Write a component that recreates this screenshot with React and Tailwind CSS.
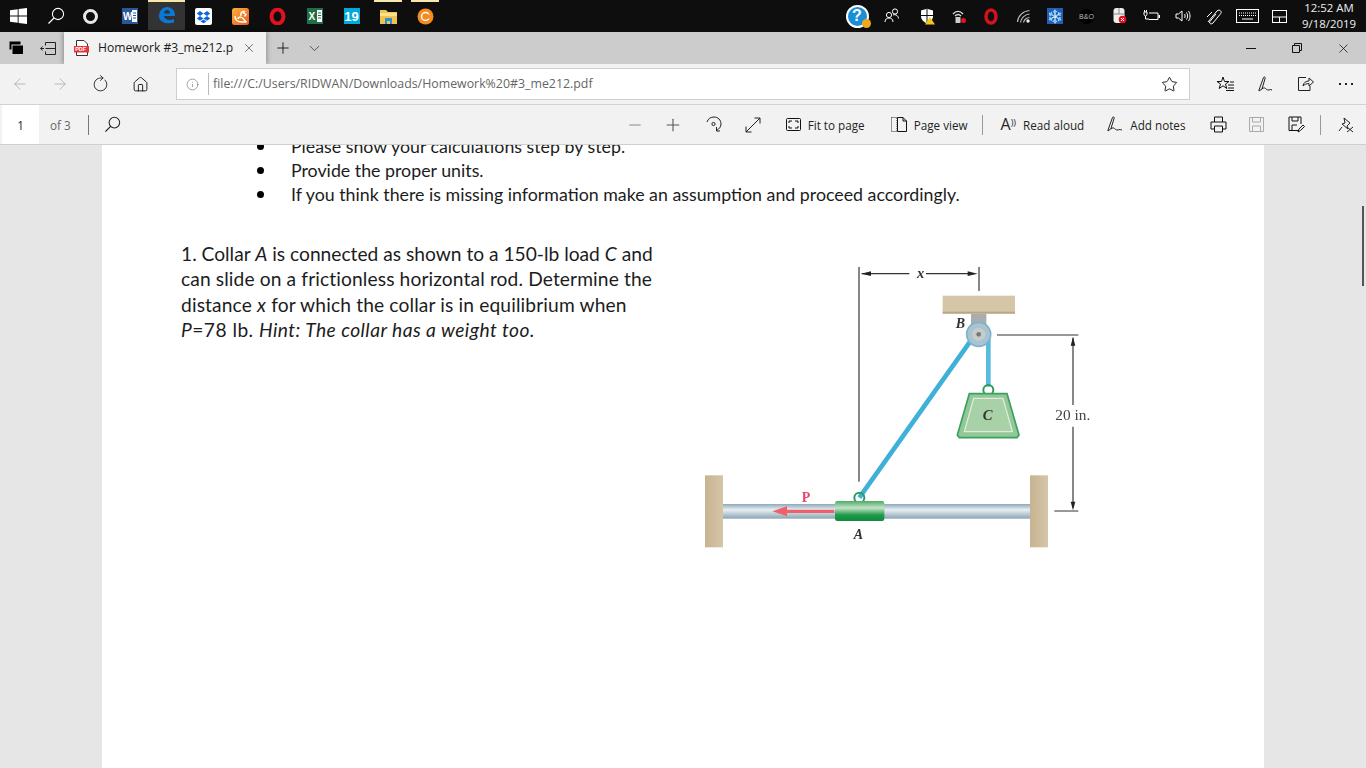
import { ArrowLeft, ArrowRight, ChevronDown, Home, Info, Minus, Plus, RotateCw, Star, X } from "lucide-react";

function Svg({ w = 20, h = 20, vb, children, className = "" }) {
  return (
    <svg width={w} height={h} viewBox={vb || `0 0 ${w} ${h}`} fill="none" className={className}>
      {children}
    </svg>
  );
}

const Search = ({ c = "#fff", size = 18 }) => (
  <Svg w={size} h={size} vb="0 0 18 18">
    <circle cx="11" cy="7" r="5.6" stroke={c} strokeWidth="1.1" />
    <path d="M7 11 L1.5 16.5" stroke={c} strokeWidth="1.3" />
  </Svg>
);

function Slot({ className = "w-[37px]", children }) {
  return <div className={`flex h-full shrink-0 items-center justify-center ${className}`}>{children}</div>;
}

function Taskbar() {
  return (
    <div className="flex h-[32px] shrink-0 items-center bg-[#0e0e0e] text-white">
      <Slot>
        <Svg w={17} h={16}>
          <path d="M0 2.3 7.7 1.2V7.6H0ZM8.6 1 17 0V7.6H8.6ZM0 8.5H7.7V14.8L0 13.7ZM8.6 8.5H17V16L8.6 14.9Z" fill="#fff" />
        </Svg>
      </Slot>
      <Slot><Search /></Slot>
      <Slot className="w-[33px]">
        <div className="h-[15px] w-[15px] rounded-full border-[3px] border-[#e8e8e8]" />
      </Slot>
      <Slot className="w-[41px] pl-[4px]">
        <Svg w={16} h={16}>
          <rect width="16" height="16" fill="#2b579a" />
          <rect x="10" y="2" width="5" height="12" fill="#fff" />
          <path d="M11 5h3M11 7.5h3M11 10h3" stroke="#2b579a" />
          <text x="1" y="12" fontSize="10" fontWeight="700" fill="#fff" fontFamily="Liberation Sans">W</text>
        </Svg>
      </Slot>
      <div className="relative flex h-[30px] w-[37px] shrink-0 items-center justify-center self-start bg-[#333333]">
        <div className="absolute left-0 top-0 h-[2px] w-full bg-[#f7e7a8]" />
        <Svg w={18} h={18}>
          <path fillRule="evenodd" d="M9 1C14 1 17 4.500 17 10H6C6.500 13.500 11 15 16 13V16.500C10 18.500 1 17 1 10 1 5 4.500 1 9 1ZM6 7.500H12C12 5.500 11 4 9 4 7.500 4 6 5.500 6 7.500Z" fill="#0a78d7" />
        </Svg>
      </div>
      <Slot>
        <Svg w={17} h={17}>
          <rect width="17" height="17" rx="2" fill="#fff" />
          <path d="M5 3 8.500 5.500 5 8 1.800 5.500ZM12 3 15.200 5.500 12 8 8.500 5.500ZM5 8 8.500 10.500 5 12.800 1.800 10.500ZM12 8 15.200 10.500 12 12.800 8.500 10.500ZM5.500 13.500 8.500 11.500 11.500 13.500 8.500 15.300Z" fill="#0f66d8" />
        </Svg>
      </Slot>
      <Slot>
        <Svg w={17} h={17}>
          <defs>
            <linearGradient id="uc" x1="0" y1="0" x2="1" y2="1">
              <stop offset="0" stopColor="#fbb03b" />
              <stop offset="1" stopColor="#ee5a1c" />
            </linearGradient>
          </defs>
          <rect width="17" height="17" rx="2.500" fill="url(#uc)" />
          <path d="M3 8C3 12 6 14 10 14H14.500C12.500 13 12 11 10.500 10 8.500 8.500 6 9 6 11M9 8C8 5 10 3 12.500 3.500L11.500 5 14 6.500 12.500 8.500" stroke="#fff" strokeWidth="1.400" />
        </Svg>
      </Slot>
      <Slot>
        <Svg w={17} h={17}>
          <ellipse cx="8.500" cy="8.500" rx="6" ry="7" stroke="#e0121f" strokeWidth="4" />
        </Svg>
      </Slot>
      <Slot>
        <Svg w={16} h={16}>
          <rect width="16" height="16" fill="#1e7145" />
          <rect x="10" y="2" width="5" height="12" fill="#fff" />
          <path d="M11 5h3M11 7.500h3M11 10h3" stroke="#1e7145" />
          <text x="1.500" y="12" fontSize="10" fontWeight="700" fill="#fff" fontFamily="Liberation Sans">X</text>
        </Svg>
      </Slot>
      <Slot>
        <div className="flex h-[16px] w-[16px] items-center justify-center bg-[#00a8dc] font-['Liberation_Sans'] text-[13px] font-bold leading-none text-white">19</div>
      </Slot>
      <div className="relative flex h-full w-[37px] shrink-0 items-center justify-center">
        <div className="absolute left-[4px] top-0 h-[2px] w-[28px] bg-[#f7e7a8]" />
        <Svg w={17} h={15}>
          <path d="M0 1H6L8 3H17V15H0Z" fill="#f0c24e" />
          <rect y="4" width="17" height="3" fill="#fbe08a" />
          <rect x="5" y="9" width="7" height="6" fill="#2a8fd6" />
          <rect x="7" y="12" width="3" height="3" fill="#f0c24e" />
        </Svg>
      </div>
      <div className="relative flex h-full w-[37px] shrink-0 items-center justify-center">
        <div className="absolute left-[4px] top-0 h-[2px] w-[28px] bg-[#f7e7a8]" />
        <Svg w={17} h={17}>
          <circle cx="8.500" cy="8.500" r="8" fill="#f58a1f" />
          <circle cx="8.500" cy="8.500" r="4" stroke="#fff" strokeWidth="1.500" />
          <rect x="10" y="6.500" width="3" height="4" fill="#f58a1f" />
        </Svg>
      </div>

      <div className="ml-auto flex h-full items-center">
        <Slot className="w-[34px]">
          <div className="relative flex h-[23px] w-[23px] items-center justify-center rounded-full border-2 border-white bg-[#1a8fd8] font-['Liberation_Sans'] text-[16px] font-bold leading-none text-white">
            ?
            <span className="absolute -bottom-[2px] -right-[4px] h-[9px] w-[9px] rounded-full bg-[#f0a81e]" />
          </div>
        </Slot>
        <Slot className="w-[36px]">
          <Svg w={16} h={16}>
            <circle cx="5" cy="7" r="2.600" stroke="#fff" />
            <circle cx="11" cy="3.500" r="2.600" stroke="#fff" />
            <path d="M1 14C1 11 3 10 5 10S9 11 9 14M9 7C10 6.500 12 6.500 13 7.500 14 8.500 14.500 9.500 14.500 10.500" stroke="#fff" />
          </Svg>
        </Slot>
        <Slot className="w-[33px]">
          <Svg w={16} h={17}>
            <path d="M2 2.500 8 .8 14 2.500V8C14 12 11 14 8 15.500 5 14 2 12 2 8Z" fill="#fff" />
            <path d="M8 1V15M2 7.500H14" stroke="#0e0e0e" />
            <path d="M11 9 16 16.500H6Z" fill="#f5c518" />
          </Svg>
        </Slot>
        <Slot className="w-[31px]">
          <Svg w={16} h={16}>
            <path d="M2 6C5 2.500 9 2.500 12 6M4 8C6 6 8 6 10 8" stroke="#ddd" strokeWidth="1.300" />
            <rect x="4.500" y="9" width="5" height="6" fill="#ccc" />
            <circle cx="12.500" cy="12.500" r="2.500" fill="#e81123" />
          </Svg>
        </Slot>
        <Slot className="w-[33px]">
          <Svg w={16} h={17}>
            <ellipse cx="8" cy="8.500" rx="5" ry="6.500" stroke="#d4121e" strokeWidth="3.400" />
          </Svg>
        </Slot>
        <Slot className="w-[34px]">
          <Svg w={16} h={16}>
            <path d="M1.500 14C2 8 7 3 13.500 2.500M4.500 14.500C5 10.500 8.500 6.500 13.500 6M7.500 14.500C8 12 10.500 9.500 13.500 9.500" stroke="#bbb" strokeWidth="1.200" />
            <circle cx="12" cy="13" r="1.700" fill="#eee" />
          </Svg>
        </Slot>
        <Slot className="w-[28px]">
          <div className="flex h-[16px] w-[16px] items-center justify-center bg-[#1f5fb8] text-[13px] leading-none text-white">❄</div>
        </Slot>
        <Slot className="w-[35px]">
          <div className="flex h-[15px] w-[15px] items-center justify-center rounded-full bg-black font-['Liberation_Sans'] text-[7px] leading-none text-[#bbb]">B&amp;O</div>
        </Slot>
        <Slot className="w-[32px]">
          <Svg w={14} h={16}>
            <rect x="0.500" y="0" width="11" height="15" rx="3" fill="#eee" />
            <path d="M6 0V6M1 6H11" stroke="#888" />
            <circle cx="9.500" cy="11.500" r="3.800" fill="#e81123" />
            <path d="M8 10 11 13M11 10 8 13" stroke="#fff" />
          </Svg>
        </Slot>
        <Slot className="w-[31px]">
          <Svg w={17} h={12}>
            <path d="M1 2V4C1 5.500 2 6 2.500 6S4 5.500 4 4V2ZM2.500 6V9H6" stroke="#fff" />
            <path d="M1.500 0V2M3.500 0V2" stroke="#fff" />
            <path d="M6 3H15V9.500H6" stroke="#fff" />
            <rect x="15.500" y="5" width="1.500" height="3" fill="#fff" />
          </Svg>
        </Slot>
        <Slot className="w-[32px]">
          <Svg w={16} h={14}>
            <path d="M1 5H3.500L7 2V12L3.500 9H1Z" stroke="#fff" />
            <path d="M9.500 5C10.300 6 10.300 8 9.500 9M11.500 3.500C13 5.500 13 8.500 11.500 10.500M13.500 2C15.500 5 15.500 9 13.500 12" stroke="#fff" />
          </Svg>
        </Slot>
        <Slot className="w-[31px]">
          <Svg w={17} h={17}>
            <path d="M2 14 11 3C12 1.500 14.500 2 15 3.500 15.500 5 14.500 6 13.500 7L7 15C5.500 16.500 3.500 16 3.500 14L10 6" stroke="#fff" />
            <path d="M1 9 6 4" stroke="#fff" />
          </Svg>
        </Slot>
        <Slot className="w-[34px]">
          <Svg w={23} h={14}>
            <rect x="0.500" y="0.500" width="22" height="13" stroke="#fff" />
            <path d="M3 4H20M3 6.500H20" stroke="#fff" strokeDasharray="1 1" />
            <path d="M6 10H17" stroke="#fff" />
          </Svg>
        </Slot>
        <Slot className="w-[30px]">
          <Svg w={15} h={13}>
            <rect x="0.500" y="0.500" width="14" height="12" stroke="#fff" />
            <path d="M0 7H15M7.500 7V13" stroke="#fff" />
          </Svg>
        </Slot>
        <div className="-ml-[2px] flex w-[74px] flex-col items-center font-['Open_Sans'] text-[11.4px] leading-[16px] text-[#eee]">
          <span>12:52 AM</span>
          <span>9/18/2019</span>
        </div>
      </div>
    </div>
  );
}

function TabBar() {
  return (
    <div className="flex h-[32px] shrink-0 items-center bg-[#cccccc]">
      <Slot className="w-[32px]">
        <Svg w={15} h={14}>
          <rect x="0.500" y="0.500" width="11" height="8" fill="#000" />
          <rect x="3" y="4" width="11.500" height="9.500" fill="#000" stroke="#ccc" />
        </Svg>
      </Slot>
      <Slot className="w-[32px]">
        <Svg w={17} h={13}>
          <path d="M4 6.500H.7M2.500 4.500.7 6.500 2.500 8.500M5.500 3.500V.5H15.500V12.500H5.500V9.500M5.500 6.500H15.500" stroke="#222" />
        </Svg>
      </Slot>
      <div className="flex h-full w-[202px] items-center bg-[#f2f2f2] pl-[10px] font-['Open_Sans'] text-[12.15px] text-[#1a1a1a] shadow-[2px_0_4px_rgba(0,0,0,0.2),-2px_0_4px_rgba(0,0,0,0.2)]">
        <Svg w={15} h={16}>
          <path d="M2.500.5H10L13.500 4V15.500H2.500Z" fill="#fff" stroke="#333" />
          <rect y="6" width="15" height="6.500" fill="#e8333a" />
          <text x="1.200" y="11.200" fontSize="5.500" fontWeight="700" fill="#fff" fontFamily="Liberation Sans">PDF</text>
        </Svg>
        <span className="ml-[9px] w-[141px] whitespace-nowrap">Homework #3_me212.p</span>
        <X size={14} strokeWidth={1.100} className="ml-[3px] text-[#333]" />
      </div>
      <Slot className="ml-[1px] w-[32px]"><Plus size={18} strokeWidth={1.200} className="text-[#111]" /></Slot>
      <Slot className="w-[30px]"><ChevronDown size={17} strokeWidth={1.100} className="text-[#333]" /></Slot>
      <div className="ml-auto flex h-full items-center">
        <Slot className="w-[46px]"><div className="h-px w-[10px] bg-[#111]" /></Slot>
        <Slot className="w-[46px]">
          <Svg w={10} h={10}>
            <path d="M.5 2.500H7.500V9.500H.5ZM2.500 2.500V.5H9.500V7.500H7.500" stroke="#111" />
          </Svg>
        </Slot>
        <Slot className="w-[46px]"><X size={15} strokeWidth={1.200} className="text-[#111]" /></Slot>
      </div>
    </div>
  );
}

function AddressBar() {
  return (
    <div className="flex h-[41px] shrink-0 items-center border-b border-[#d2d2d2] bg-[#f2f2f2]">
      <Slot className="w-[40px]"><ArrowLeft size={18} strokeWidth={1} className="text-[#a5a5a5]" /></Slot>
      <Slot className="w-[40px]"><ArrowRight size={18} strokeWidth={1} className="text-[#a5a5a5]" /></Slot>
      <Slot className="w-[40px]"><RotateCw size={17} strokeWidth={1.200} className="-rotate-45 text-[#222]" /></Slot>
      <Slot className="w-[40px]"><Home size={17} strokeWidth={1.300} className="text-[#111]" /></Slot>
      <div className="ml-[16px] flex h-[32px] w-[1014px] items-center border border-[#cfcfcf] bg-white font-['Open_Sans'] text-[12.37px] text-[#666]">
        <Slot className="w-[31px]"><Info size={13} strokeWidth={1} className="text-[#555]" /></Slot>
        <div className="h-[22px] w-px bg-[#bbb]" />
        <span className="ml-[4px] pt-[1px]">file:///C:/Users/RIDWAN/Downloads/Homework%20#3_me212.pdf</span>
        <Star size={17} strokeWidth={1.300} className="ml-auto mr-[11px] text-[#111]" />
      </div>
      <div className="flex h-full flex-1 items-center pl-[16px]">
        <Slot className="w-[40px]">
          <Svg w={18} h={16}>
            <path d="M6 1 7.500 5.500H12L8.500 8 9.800 12.500 6 9.800 2.200 12.500 3.500 8 0 5.500H4.500Z" stroke="#111" />
            <path d="M11 9H17M11 12H17M9 14.500H17M13 6H17" stroke="#111" />
          </Svg>
        </Slot>
        <Slot className="w-[40px]">
          <Svg w={18} h={17}>
            <path d="M2 14 6.500 1.500C7 .5 8.500 1 8.200 2L5 13 2 15ZM5 13C8 10 9 14 11 14S13 13 15 14" stroke="#222" />
          </Svg>
        </Slot>
        <Slot className="w-[40px]">
          <Svg w={16} h={16}>
            <path d="M8 1.500H.5V14.500H12V10M5 10C5.500 6.500 8 5 11 5V2L15.500 6 11 10V7.500C8.500 7.500 6.500 8.500 5 10Z" stroke="#222" />
          </Svg>
        </Slot>
        <Slot className="w-[40px]">
          <span className="flex gap-[4px]">
            <i className="h-[2px] w-[2px] bg-[#222]" />
            <i className="h-[2px] w-[2px] bg-[#222]" />
            <i className="h-[2px] w-[2px] bg-[#222]" />
          </span>
        </Slot>
      </div>
    </div>
  );
}

function PdfTool({ icon, label, className = "" }) {
  return (
    <div className={`flex items-center gap-[7px] whitespace-nowrap ${className}`}>
      {icon}
      <span className="pt-[2px]">{label}</span>
    </div>
  );
}

function PdfToolbar() {
  return (
    <div className="flex h-[40px] shrink-0 items-center border-b border-[#cfcfcf] bg-[#f2f2f2] font-['Open_Sans'] text-[11.7px] text-[#1f1f1f]">
      <div className="ml-[2px] flex h-full w-[37px] items-center justify-center bg-white pt-[2px] text-[#222]">1</div>
      <span className="ml-[11px] pt-[2px] text-[#666]">of 3</span>
      <div className="ml-[17px] h-[20px] w-px bg-[#777]" />
      <div className="ml-[15px]"><Search c="#222" size={17} /></div>

      <Minus size={18} strokeWidth={1.500} className="ml-[505px] text-[#888]" />
      <Plus size={20} strokeWidth={1.300} className="ml-[19px] text-[#555]" />
      <div className="ml-[22px]">
        <Svg w={17} h={18}>
          <path d="M2 6C3 2.500 6 1 9 1 13 1 16 4 16 8 16 11 14 13 11.500 14.500M11.500 11V15H15" stroke="#222" />
          <circle cx="8.500" cy="8" r="1.600" stroke="#222" />
        </Svg>
      </div>
      <div className="ml-[23px]">
        <Svg w={16} h={16}>
          <path d="M1 15 15 1M9.500 1H15V6.500M1 9.500V15H6.500" stroke="#222" />
        </Svg>
      </div>
      <PdfTool
        className="ml-[25px]"
        label="Fit to page"
        icon={
          <Svg w={15} h={13}>
            <rect x="0.500" y="0.500" width="14" height="12" rx="1" stroke="#111" />
            <path d="M3 5V3H6M9 3H12V5M12 8V10H9M6 10H3V8" stroke="#111" />
          </Svg>
        }
      />
      <PdfTool
        className="ml-[26px]"
        label="Page view"
        icon={
          <Svg w={16} h={15}>
            <path d="M.5.5H6V14.500H.5Z" stroke="#333" strokeDasharray="1 1" />
            <path d="M6.500.5H12L15.500 4V14.500H6.500ZM12 .5V4H15.500" stroke="#111" />
          </Svg>
        }
      />
      <div className="ml-[14px] h-[20px] w-px bg-[#999]" />
      <PdfTool
        className="ml-[18px]"
        label="Read aloud"
        icon={
          <span className="text-[16px] leading-none text-[#222]">
            A<sup className="text-[9px]">))</sup>
          </span>
        }
      />
      <PdfTool
        className="ml-[23px]"
        label="Add notes"
        icon={
          <Svg w={16} h={16}>
            <path d="M1 14 5.500 1.500C6 .5 7.500 1 7.200 2L4 12.500 1 15ZM4 13C7 10 8 14 10 14S12 13 15 14" stroke="#222" />
          </Svg>
        }
      />
      <div className="ml-[24px]">
        <Svg w={17} h={17}>
          <path d="M4.500 6V1H12.500V6M4.500 13H1V6H16V13H12.500M4.500 10H12.500V16H4.500Z" stroke="#111" />
        </Svg>
      </div>
      <div className="ml-[22px]">
        <Svg w={15} h={15}>
          <path d="M.5.5H14.500V14.500H.5ZM3.500.5V5H11.500V.5M3.500 14.500V9H11.500V14.500" stroke="#aaa" />
        </Svg>
      </div>
      <div className="ml-[24px]">
        <Svg w={17} h={17}>
          <path d="M10 14.500H1V1H13V8M4 1V5H10V1M4 14V9H9" stroke="#111" />
          <path d="M10 16 11 13 15 9 16.500 10.500 12.500 14.500Z" stroke="#111" />
        </Svg>
      </div>
      <div className="ml-[15px] h-[20px] w-px bg-[#999]" />
      <div className="ml-[17px]">
        <Svg w={16} h={16}>
          <path d="M6 1 12 6 9 9 10 12 4 7 7 6ZM4 10 1 14" stroke="#222" />
          <path d="M9 10 15 15M15 10 9 15" stroke="#222" />
        </Svg>
      </div>
    </div>
  );
}

function Diagram() {
  return (
    <svg width="420" height="300" viewBox="0 0 1260 900" fill="none" className="shrink-0 blur-[0.5px]">
      <defs>
        <linearGradient id="rod" x1="0" y1="0" x2="0" y2="1">
          <stop offset="0" stopColor="#8fa9b8" />
          <stop offset="0.4" stopColor="#e6eff3" />
          <stop offset="1" stopColor="#8aa4b4" />
        </linearGradient>
        <linearGradient id="wood" x1="0" y1="0" x2="1" y2="0">
          <stop offset="0" stopColor="#c6b391" />
          <stop offset="1" stopColor="#d6c6a8" />
        </linearGradient>
        <linearGradient id="collar" x1="0" y1="0" x2="0" y2="1">
          <stop offset="0" stopColor="#4cab68" />
          <stop offset="0.35" stopColor="#c5e3c6" />
          <stop offset="0.7" stopColor="#1f9a4a" />
          <stop offset="1" stopColor="#0e8a3c" />
        </linearGradient>
      </defs>

      <path d="M504 36V680M864 36V108M512 56H655M705 56H838M918 240H1162M1090 768H1162M1146 248V450M1146 515V758" stroke="#333" strokeWidth="3.500" />
      <path d="M510 56 540 49V63ZM860 56 830 49V63ZM1146 246 1139 272H1153ZM1146 766 1139 740H1153Z" fill="#222" />
      <text x="678" y="70" fontFamily="Liberation Serif" fontStyle="italic" fontWeight="700" fontSize="44" fill="#333">x</text>

      <rect x="755" y="122" width="217" height="54" fill="#d6c6a8" />
      <rect x="755" y="170" width="217" height="6" fill="#b9a786" />
      <rect x="840" y="176" width="46" height="56" fill="#a9adac" />
      <text x="794" y="218" fontFamily="Liberation Serif" fontStyle="italic" fontWeight="700" fontSize="42" fill="#333">B</text>

      <rect x="95" y="747" width="922" height="44" fill="url(#rod)" />
      <rect x="42" y="661" width="54" height="216" fill="url(#wood)" />
      <rect x="1017" y="661" width="54" height="216" fill="url(#wood)" />

      <path d="M505 728 850 242" stroke="#3fb0d8" strokeWidth="14" />
      <path d="M892 250V395" stroke="#58bcdc" strokeWidth="14" />
      <circle cx="863" cy="238" r="36" fill="#a8c4d2" stroke="#7fb2cc" strokeWidth="5" />
      <circle cx="863" cy="238" r="20" fill="#c5ccca" />
      <circle cx="863" cy="238" r="7" fill="#777" />

      <circle cx="892" cy="405" r="15" stroke="#2e9a58" strokeWidth="6" />
      <path d="M835 416H948L984 540 978 548H805L799 540Z" fill="#93c798" stroke="#3ca060" strokeWidth="5" />
      <path d="M848 430H936L964 530H820Z" fill="#a9d1a8" stroke="#daeeda" strokeWidth="4" />
      <text x="875" y="496" fontFamily="Liberation Serif" fontStyle="italic" fontWeight="700" fontSize="44" fill="#333">C</text>

      <circle cx="505" cy="728" r="15" stroke="#2e9a58" strokeWidth="6" />
      <rect x="432" y="738" width="148" height="60" rx="7" fill="url(#collar)" />
      <path d="M285 769H430" stroke="#f0606a" strokeWidth="10" />
      <path d="M244 769 288 754V784Z" fill="#f0606a" />
      <text x="332" y="740" fontFamily="Liberation Serif" fontWeight="700" fontSize="42" fill="#e8456a">P</text>
      <text x="488" y="852" fontFamily="Liberation Serif" fontStyle="italic" fontWeight="700" fontSize="42" fill="#333">A</text>
      <text x="1093" y="496" fontFamily="Liberation Serif" fontSize="46" fill="#444">20 in.</text>
    </svg>
  );
}

function Page() {
  return (
    <div className="relative flex-1 overflow-hidden bg-[#e6e6e6]">
      <div className="mx-auto h-full w-[1162px] overflow-hidden bg-white font-['Lato'] text-[#1c1c1c]">
        <ul className="-mt-[11px] ml-[155px] text-[17.8px] leading-[24px]">
          {[
            "Please show your calculations step by step.",
            "Provide the proper units.",
            "If you think there is missing information make an assumption and proceed accordingly.",
          ].map((t) => (
            <li key={t} className="flex items-center whitespace-nowrap">
              <span className="mr-[27px] h-[7px] w-[7px] rounded-full bg-black" />
              {t}
            </li>
          ))}
        </ul>
        <div className="mt-[35px] flex items-start pl-[79px]">
          <div className="w-[510px] shrink-0 whitespace-nowrap text-[19.2px] leading-[25.3px]">
            <div>1. Collar <i>A</i> is connected as shown to a 150-lb load <i>C</i> and</div>
            <div className="tracking-[0.12px]">can slide on a frictionless horizontal rod. Determine the</div>
            <div className="tracking-[0.14px]">distance <i>x</i> for which the collar is in equilibrium when</div>
            <div className="tracking-[0.46px]"><i>P</i>=78 lb. <i>Hint: The collar has a weight too.</i></div>
          </div>
          <div className="mt-[14px]"><Diagram /></div>
        </div>
      </div>
      <div className="absolute right-[2px] top-[61px] h-[80px] w-[2px] bg-[#555]" />
    </div>
  );
}

export default function App() {
  return (
    <div className="flex h-[768px] w-[1366px] flex-col overflow-hidden bg-[#e6e6e6]">
      <Taskbar />
      <TabBar />
      <AddressBar />
      <PdfToolbar />
      <Page />
    </div>
  );
}
